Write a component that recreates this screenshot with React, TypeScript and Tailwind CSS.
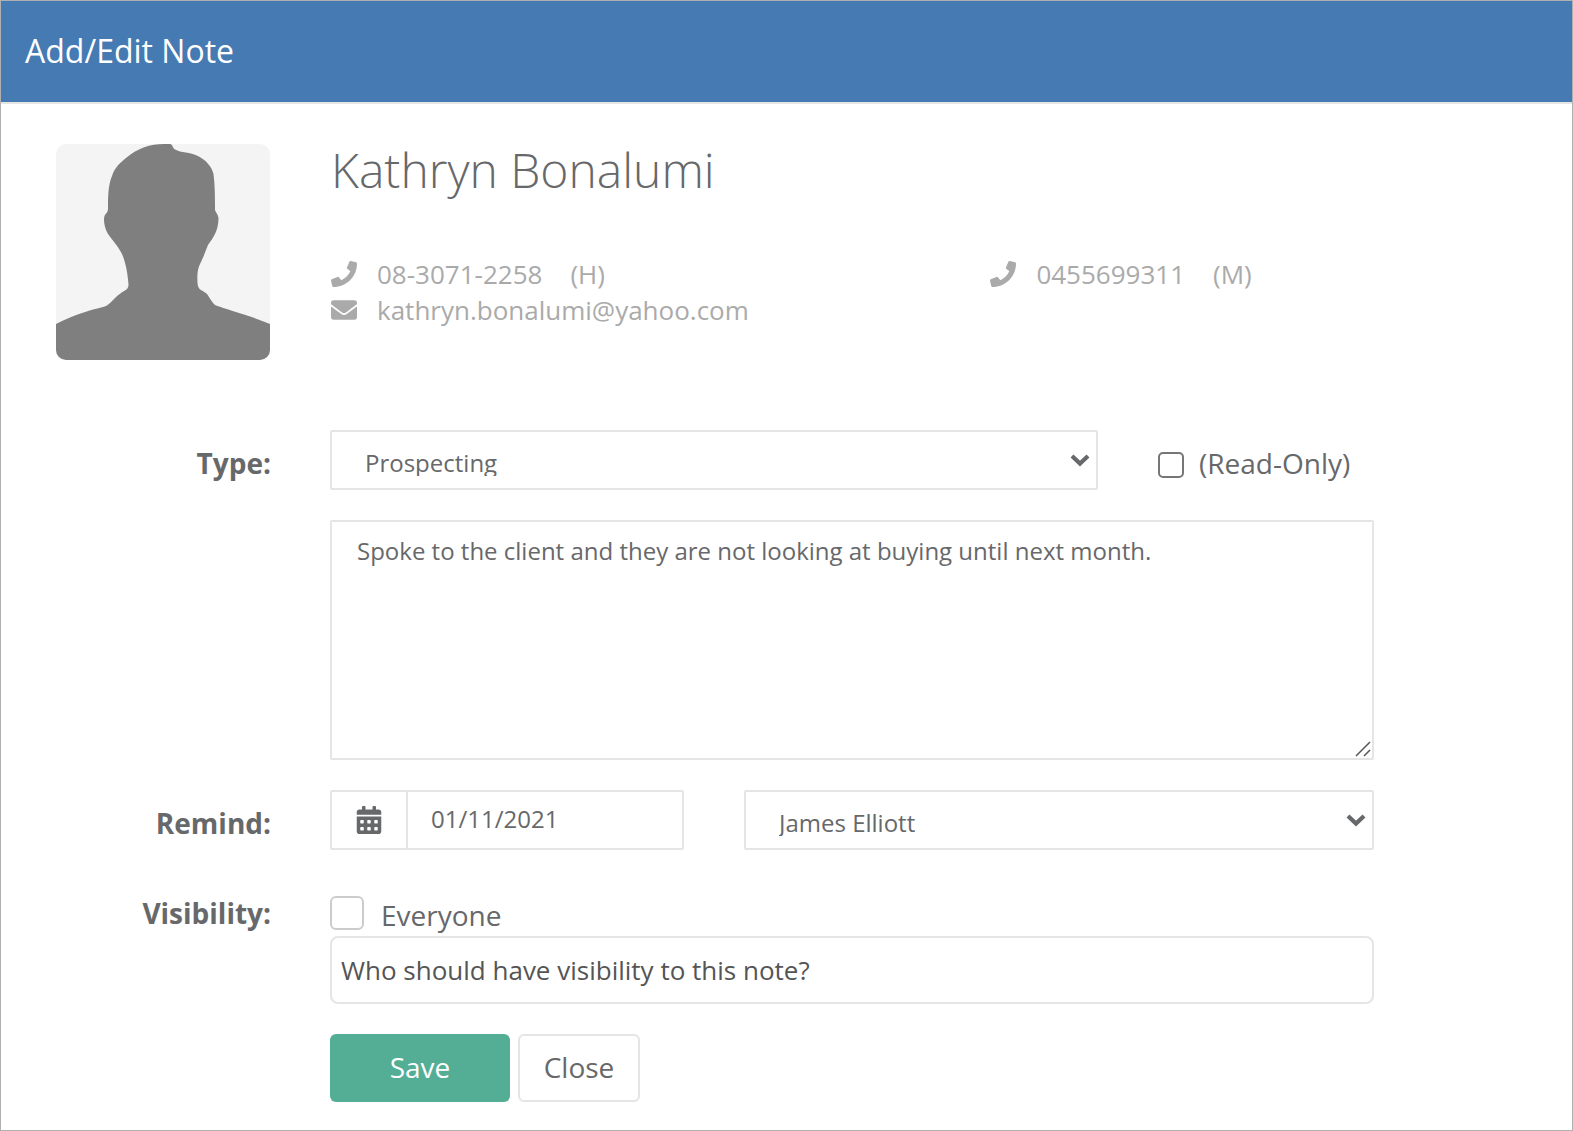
import type { ReactNode } from "react";
import { FaCalendarAlt, FaEnvelope, FaPhone } from "react-icons/fa";

function Avatar() {
    return (
        <svg viewBox="0 0 214 216" preserveAspectRatio="none" className="block h-[216px] w-full rounded-[10px] bg-[#f4f4f4]" role="img" aria-label="Contact photo">
            <path
                fill="#7f7f7f"
                d="M0 180 C8 176 16 172 26 169 C37 165 45 164 51 161.500 C56 158 60 152 65 149 C69 146 72 146 72.500 141 C72 132 70 119 66 110 C62 102 57 97 52 90 C48 83 47 74 49 71 C50 69 52 68 52 65 C52 54 52 41 56 32 C59 23 64 19 70 14 C82 4 94 0 108 0 L114 0 C117 0 116 4 119 5.500 C125 9 134 8 142 12 C150 16 156 23 157.500 30 C159 41 159 54 159 66 C160 69 162 70 162.500 74 C162.500 87 157 94 152 101 C149 108 148 112 145 118 C142 124 141 128 141.500 139 C142 147 147 146 151 150 C154 154 156 159 160 161.500 C170 165 184 169 191 171.500 C200 174.500 207 177 214 180 V216 H0 Z"
            />
        </svg>
    );
}

function Chevron() {
    return (
        <svg viewBox="0 0 20 14" className="pointer-events-none absolute top-[23px] right-2 h-[14px] w-5" aria-hidden="true">
            <path d="M2 3 L10 10.500 L18 3" fill="none" stroke="#67686a" strokeWidth="4.200" />
        </svg>
    );
}

function FormSelect({ id, label, options }: { id: string; label?: string; options: string[] }) {
    return (
        <div className="relative">
            <select id={id} aria-label={label} className="block h-[60px] w-full appearance-none rounded-xs border-2 border-[#e5e5e5] bg-white pt-[18px] pr-10 pb-3 pl-[33px] text-2xl/[26px]">
                {options.map((option) => (
                    <option key={option}>{option}</option>
                ))}
            </select>
            <Chevron />
        </div>
    );
}

function FormLabel({ htmlFor, children }: { htmlFor: string; children: ReactNode }) {
    return (
        <label htmlFor={htmlFor} className="col-span-2 pt-[14px] pr-[29px] text-right text-[28px]/[38px] font-bold">
            {children}
        </label>
    );
}

function Phone({ number, kind }: { number: string; kind: string }) {
    return (
        <div className="flex items-center">
            <FaPhone className="mr-5 size-[26px]" />
            <span>{number}</span>
            <span className="ml-7">({kind})</span>
        </div>
    );
}

function App() {
    return (
        <div className="min-h-screen border border-[#b0b0b0] bg-white font-['Open_Sans',sans-serif] text-[#67686a]">
            <header className="border-b-2 border-[#e5e5e5] bg-[#457ab2] px-6 pt-7 pb-[29px]">
                <h1 className="text-[32px]/[44px] text-white">Add/Edit Note</h1>
            </header>

            <main className="pt-10 pr-[168px] pb-7 pl-[23px]">
                <section className="grid grid-cols-10">
                    <div className="col-span-2 pr-[30px] pl-8">
                        <Avatar />
                    </div>
                    <div className="col-span-8 pl-[31px]">
                        <h2 className="text-5xl/[52px] font-light">Kathryn Bonalumi</h2>
                        <div className="mt-[60px] grid grid-cols-[110fr_69fr] text-[26px]/[36px] text-[#aaa]">
                            <Phone number="08-3071-2258" kind="H" />
                            <Phone number="0455699311" kind="M" />
                            <div className="flex items-center">
                                <FaEnvelope className="mr-5 size-[26px]" />
                                <a href="mailto:kathryn.bonalumi@yahoo.com">kathryn.bonalumi@yahoo.com</a>
                            </div>
                        </div>
                    </div>
                </section>

                <form className="mt-[70px] flex flex-col gap-[30px]">
                    <div className="grid grid-cols-10">
                        <FormLabel htmlFor="type">Type:</FormLabel>
                        <div className="col-span-6 px-[30px]">
                            <FormSelect id="type" options={["Prospecting"]} />
                        </div>
                        <label className="col-span-2 flex items-center gap-[15px] pt-[6px] pl-[30px] text-[28px]/[38px] whitespace-nowrap">
                            <input type="checkbox" className="mt-1 size-[26px] shrink-0 appearance-none rounded-[5px] border-2 border-[#767676] bg-white" />
                            (Read-Only)
                        </label>
                    </div>

                    <div className="grid grid-cols-10">
                        <div className="relative col-span-8 col-start-3 mx-[30px]">
                            <textarea
                                aria-label="Note"
                                className="block h-60 w-full resize-none rounded-xs border-2 border-[#e5e5e5] px-[25px] py-3 text-2xl/[34px]"
                                defaultValue="Spoke to the client and they are not looking at buying until next month."
                            />
                            <svg viewBox="0 0 16 16" className="pointer-events-none absolute right-[3px] bottom-[3px] size-4" aria-hidden="true">
                                <path d="M1 15 L15 1 M9 15 L15 9" fill="none" stroke="#555" strokeWidth="1.500" />
                            </svg>
                        </div>
                    </div>

                    <div className="grid grid-cols-10">
                        <FormLabel htmlFor="remind">Remind:</FormLabel>
                        <div className="col-span-3 px-[30px]">
                            <div className="flex h-[60px] rounded-xs border-2 border-[#e5e5e5]">
                                <button type="button" aria-label="Pick a date" className="flex w-[76px] shrink-0 items-center justify-center border-r-2 border-[#e5e5e5]">
                                    <FaCalendarAlt className="size-7" />
                                </button>
                                <input id="remind" type="text" defaultValue="01/11/2021" className="w-full min-w-0 px-[23px] pb-[2px] text-2xl" />
                            </div>
                        </div>
                        <div className="col-span-5 px-[30px]">
                            <FormSelect id="assignee" label="Person to remind" options={["James Elliott"]} />
                        </div>
                    </div>

                    <div className="grid grid-cols-10">
                        <FormLabel htmlFor="visibility">Visibility:</FormLabel>
                        <div className="col-span-8 px-[30px] pt-4">
                            <label className="flex h-10 items-start gap-[17px] text-[28px]/[38px]">
                                <input type="checkbox" className="size-[34px] appearance-none rounded-md border-2 border-[#ccc] bg-white" />
                                Everyone
                            </label>
                            <input
                                id="visibility"
                                type="text"
                                placeholder="Who should have visibility to this note?"
                                className="block h-[68px] w-full rounded-lg border-2 border-[#e5e5e5] px-[9px] text-[26px] placeholder:text-[#555]"
                            />
                        </div>
                    </div>

                    <div className="grid grid-cols-10">
                        <div className="col-span-8 col-start-3 flex gap-2 px-[30px] text-[28px]/[38px]">
                            <button type="submit" className="h-[68px] w-[180px] rounded-md bg-[#54ae96] pb-[2px] text-white">Save</button>
                            <button type="button" className="h-[68px] w-[122px] rounded-md border-2 border-[#e5e5e5] bg-white pb-[2px]">Close</button>
                        </div>
                    </div>
                </form>
            </main>
        </div>
    );
}

export default App;
